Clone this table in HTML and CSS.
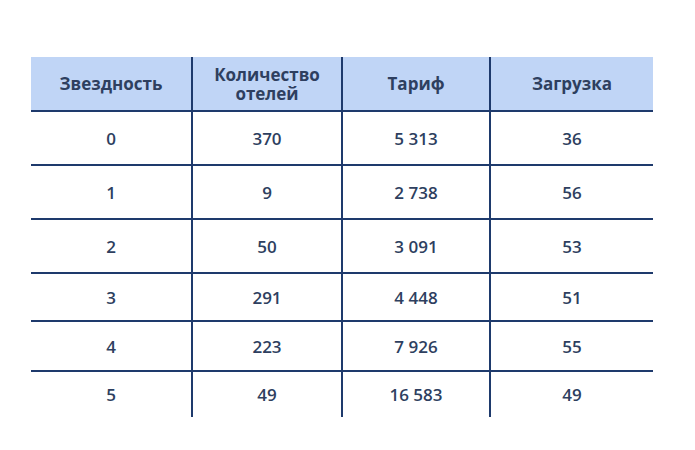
FILE: index.html
```html
<!DOCTYPE html>
<html lang="ru">
<head>
<meta charset="utf-8">
<link rel="stylesheet" href="styles.css">
</head>
<body>
<div class="page">
<table class="stars">
  <colgroup>
    <col class="c1"><col class="c2"><col class="c3"><col class="c4">
  </colgroup>
  <thead>
    <tr><th>Звездность</th><th>Количество<br>отелей</th><th>Тариф</th><th>Загрузка</th></tr>
  </thead>
  <tbody>
    <tr class="r1"><td>0</td><td>370</td><td>5 313</td><td>36</td></tr>
    <tr class="r2"><td>1</td><td>9</td><td>2 738</td><td>56</td></tr>
    <tr class="r3"><td>2</td><td>50</td><td>3 091</td><td>53</td></tr>
    <tr class="r4"><td>3</td><td>291</td><td>4 448</td><td>51</td></tr>
    <tr class="r5"><td>4</td><td>223</td><td>7 926</td><td>55</td></tr>
    <tr class="r6"><td>5</td><td>49</td><td>16 583</td><td>49</td></tr>
  </tbody>
</table>
</div>
</body>
</html>
```
FILE: styles.css
```css
html, body {
  margin: 0;
  padding: 0;
  background: #ffffff;
}
.page {
  padding: 57px 0 0 31px;
}
.stars {
  border-collapse: collapse;
  table-layout: fixed;
  width: 622px;
  font-family: "Open Sans", "Noto Sans", sans-serif;
  font-weight: 600;
  font-size: 17px;
  color: #2e3f5f;
}
.c1 { width: 161px; }
.c2 { width: 150px; }
.c3 { width: 148px; }
.c4 { width: 163px; }
.stars th, .stars td {
  text-align: center;
  padding: 0;
}
.stars th {
  background: #c0d5f6;
  height: 53px;
  font-weight: 700;
  line-height: 19px;
  border-bottom: 2px solid #1e3a6c;
}
.stars th + th, .stars td + td {
  border-left: 2px solid #1e3a6c;
}
.stars tbody tr {
  border-bottom: 2px solid #1e3a6c;
}
.stars tbody tr.r6 { border-bottom: none; }
.r1 td, .r2 td, .r3 td { height: 52px; }
.r4 td { height: 46px; }
.r5 td { height: 48px; }
.r6 td { height: 45px; }
```
